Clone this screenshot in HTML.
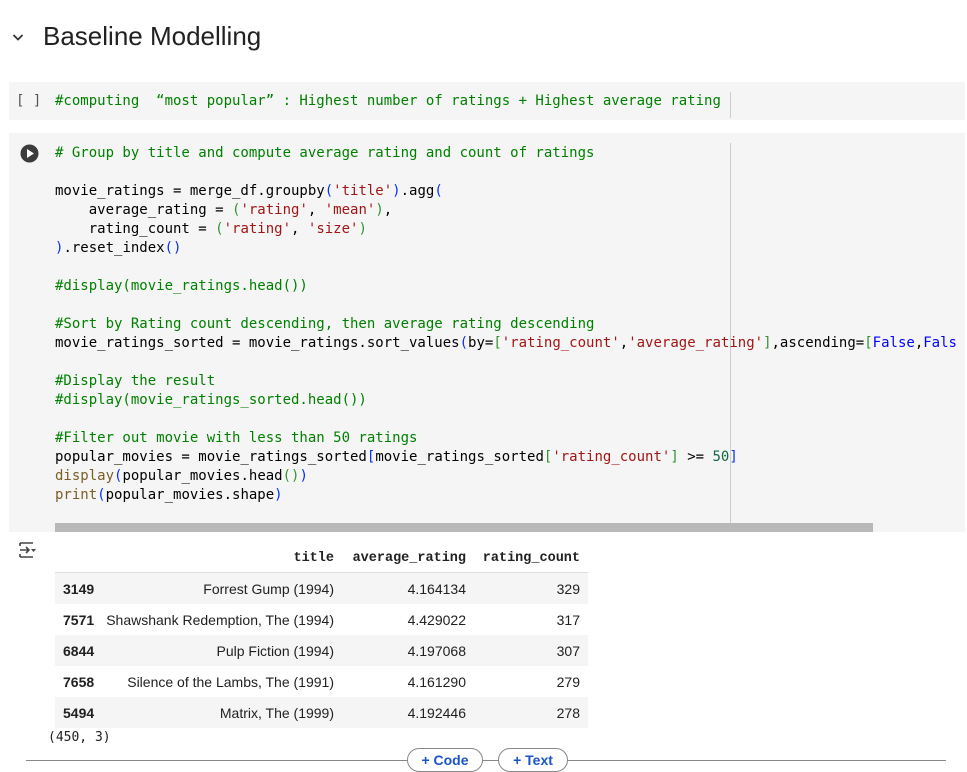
<!DOCTYPE html>
<html><head><meta charset="utf-8"><style>
body{margin:0;width:967px;height:770px;background:#fff;position:relative;overflow:hidden;font-family:"Liberation Sans",sans-serif}
.abs{position:absolute}
.code{font-family:"DejaVu Sans Mono","Liberation Mono",monospace;font-size:14px;line-height:19px;white-space:pre;color:#000}
.c{color:#008000}.s{color:#a31515}.b{color:#0431fa}.g{color:#319331}.k{color:#0000ff}.n{color:#116644}.f{color:#795e26}
table{border-collapse:collapse;font-size:14px;color:#212121;table-layout:fixed}
td,th{text-align:right;padding:0 8px;height:31px;white-space:nowrap}
td:nth-child(2){padding-left:0}
th{font-family:"Liberation Mono",monospace;font-size:13.5px;font-weight:bold;height:27px;border-bottom:1px solid #ddd}
tbody tr:nth-child(odd){background:#f5f5f5}
td.i{font-weight:bold;text-align:left}
.btn{position:absolute;top:748px;height:22px;border:1px solid #888;border-radius:12px;background:#fff;color:#1a55c8;font-size:14px;font-weight:bold;line-height:22px;text-align:center}
</style></head><body>
<svg class="abs" style="left:12px;top:32px" width="12" height="10"><path d="M1.5 3 L6 7.5 L10.5 3" stroke="#333" stroke-width="1.8" fill="none"/></svg>
<div class="abs" style="left:43px;top:21px;font-size:26px;color:#212121">Baseline Modelling</div>

<div class="abs" style="left:9px;top:82px;width:956px;height:38px;background:#f5f5f5"></div>
<div class="abs code" style="left:16px;top:92px;color:#555">[ ]</div>
<div class="abs code c" style="left:55px;top:92px">#computing  “most popular” : Highest number of ratings + Highest average rating</div>
<div class="abs" style="left:730px;top:92px;width:1px;height:26px;background:#ccc"></div>

<div class="abs" style="left:9px;top:133px;width:956px;height:399px;background:#f5f5f5"></div>
<svg class="abs" style="left:20px;top:144px" width="19" height="19"><circle cx="9.5" cy="9.5" r="9" fill="#3c3c3c"/><path d="M7 5 L14 9.5 L7 14Z" fill="#fff"/></svg>
<div class="abs" style="left:730px;top:143px;width:1px;height:389px;background:#ccc"></div>
<div class="abs code" style="left:55px;top:144px;width:905px;overflow:hidden"><span class="c"># Group by title and compute average rating and count of ratings</span>

movie_ratings = merge_df.groupby<span class="b">(</span><span class="s">'title'</span><span class="b">)</span>.agg<span class="b">(</span>
    average_rating = <span class="g">(</span><span class="s">'rating'</span>, <span class="s">'mean'</span><span class="g">)</span>,
    rating_count = <span class="g">(</span><span class="s">'rating'</span>, <span class="s">'size'</span><span class="g">)</span>
<span class="b">)</span>.reset_index<span class="b">()</span>

<span class="c">#display(movie_ratings.head())</span>

<span class="c">#Sort by Rating count descending, then average rating descending</span>
movie_ratings_sorted = movie_ratings.sort_values<span class="b">(</span>by=<span class="g">[</span><span class="s">'rating_count'</span>,<span class="s">'average_rating'</span><span class="g">]</span>,ascending=<span class="g">[</span><span class="k">False</span>,<span class="k">Fals</span>

<span class="c">#Display the result</span>
<span class="c">#display(movie_ratings_sorted.head())</span>

<span class="c">#Filter out movie with less than 50 ratings</span>
popular_movies = movie_ratings_sorted<span class="b">[</span>movie_ratings_sorted<span class="g">[</span><span class="s">'rating_count'</span><span class="g">]</span> &gt;= <span class="n">50</span><span class="b">]</span>
<span class="f">display</span><span class="b">(</span>popular_movies.head<span class="g">()</span><span class="b">)</span>
<span class="f">print</span><span class="b">(</span>popular_movies.shape<span class="b">)</span></div>
<div class="abs" style="left:55px;top:523px;width:818px;height:9px;background:#b8b8b8"></div>

<svg class="abs" style="left:18px;top:541px" width="20" height="18"><path d="M2 2h13M2 16h13M2 2v3M2 16v-3M2 9h9M8 6l3 3-3 3" stroke="#444" stroke-width="1.6" fill="none"/><path d="M13 8h5l-2.5 3z" fill="#444"/></svg>
<table class="abs" style="left:55px;top:545px;width:533px">
<colgroup><col style="width:48px"><col style="width:239px"><col style="width:132px"><col style="width:114px"></colgroup>
<thead><tr><th></th><th>title</th><th>average_rating</th><th>rating_count</th></tr></thead>
<tbody>
<tr><td class="i">3149</td><td>Forrest Gump (1994)</td><td>4.164134</td><td>329</td></tr>
<tr><td class="i">7571</td><td>Shawshank Redemption, The (1994)</td><td>4.429022</td><td>317</td></tr>
<tr><td class="i">6844</td><td>Pulp Fiction (1994)</td><td>4.197068</td><td>307</td></tr>
<tr><td class="i">7658</td><td>Silence of the Lambs, The (1991)</td><td>4.161290</td><td>279</td></tr>
<tr><td class="i">5494</td><td>Matrix, The (1999)</td><td>4.192446</td><td>278</td></tr>
</tbody></table>
<div class="abs code" style="left:48px;top:728px;font-size:13px;color:#212121">(450, 3)</div>
<div class="abs" style="left:26px;top:760px;width:920px;height:1px;background:#888"></div>
<div class="btn" style="left:407px;width:74px">+ Code</div>
<div class="btn" style="left:498px;width:68px">+ Text</div>
</body></html>
